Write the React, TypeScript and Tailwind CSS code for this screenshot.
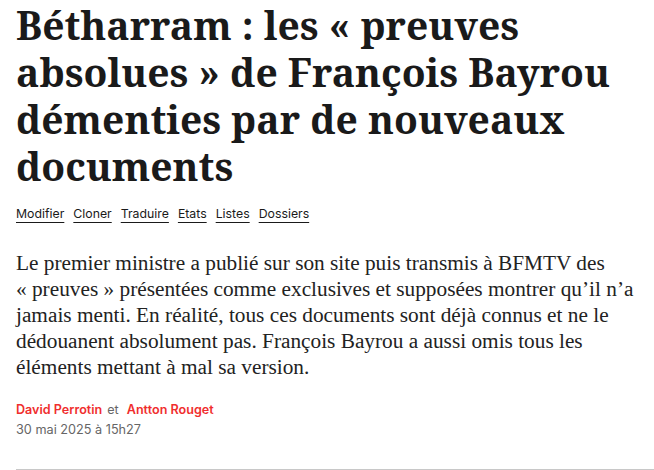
import React from "react";

const links = ["Modifier", "Cloner", "Traduire", "Etats", "Listes", "Dossiers"];

export default function App() {
  return (
    <div className="w-[654px] h-[470px] overflow-hidden bg-white pl-4">
      <h1 className="pt-[1px] font-['Noto_Serif',serif] font-bold text-[39px] leading-[47px] text-[#1a1a1a] whitespace-nowrap">
        Bétharram : les « preuves
        <br />
        absolues » de François Bayrou
        <br />
        démenties par de nouveaux
        <br />
        documents
      </h1>
      <nav className="mt-[17px] flex gap-[9px] font-['Inter',sans-serif] text-[12.3px] leading-4 text-[#1a1a1a]">
        {links.map((l) => (
          <a
            key={l}
            href="#"
            className="underline decoration-1 underline-offset-[4px] decoration-[#1a1a1a]"
          >
            {l}
          </a>
        ))}
      </nav>
      <p className="mt-[28px] font-['Liberation_Serif',serif] text-[21.3px] leading-[26px] text-[#222222] whitespace-nowrap">
        Le premier ministre a publié sur son site puis transmis à BFMTV des
        <br />
        « preuves » présentées comme exclusives et supposées montrer qu’il n’a
        <br />
        jamais menti. En réalité, tous ces documents sont déjà connus et ne le
        <br />
        dédouanent absolument pas. François Bayrou a aussi omis tous les
        <br />
        éléments mettant à mal sa version.
      </p>
      <div className="mt-5 flex items-baseline font-['Inter',sans-serif] text-[12.6px] leading-5 text-[#666666]">
        <span className="font-semibold text-[#f02e2e]">David Perrotin</span>
        <span className="ml-[5px]">et</span>
        <span className="ml-[8px] font-semibold text-[#f02e2e]">Antton Rouget</span>
      </div>
      <div className="font-['Inter',sans-serif] text-[12.7px] leading-5 text-[#666666]">
        30 mai 2025 à 15h27
      </div>
      <div className="mt-[29px] h-px bg-[#c8c8c8]" />
    </div>
  );
}
